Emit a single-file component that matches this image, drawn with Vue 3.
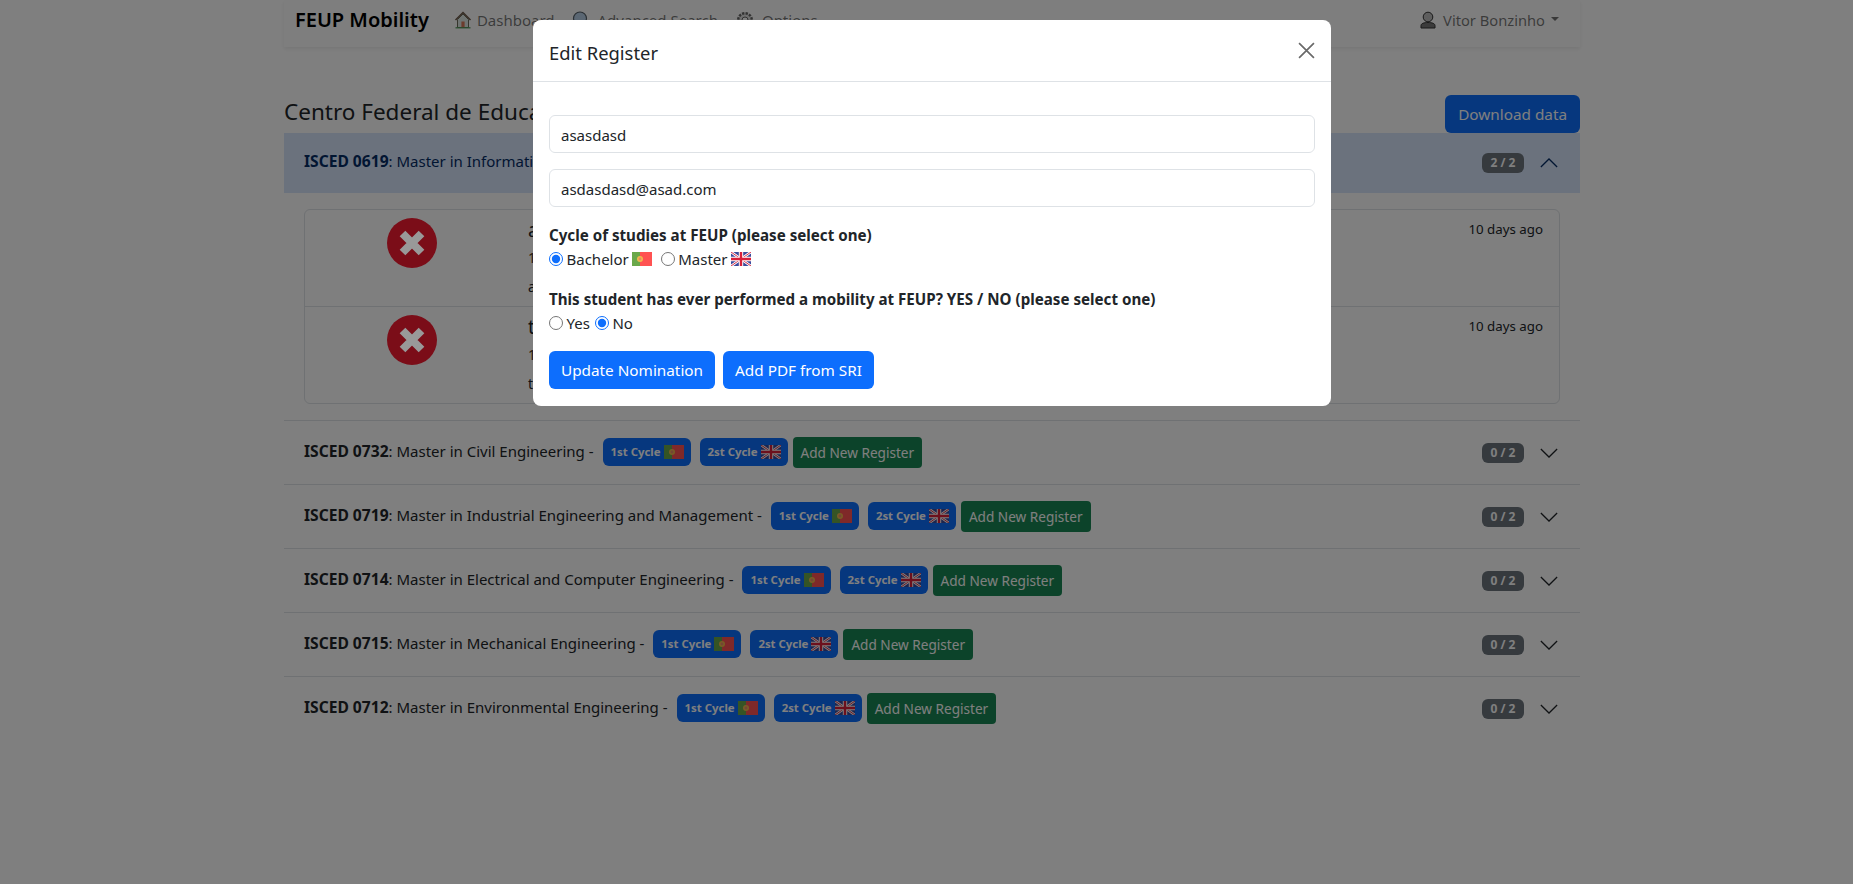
<script setup>
const rows = [
  { code: '0732', name: 'Master in Civil Engineering' },
  { code: '0719', name: 'Master in Industrial Engineering and Management' },
  { code: '0714', name: 'Master in Electrical and Computer Engineering' },
  { code: '0715', name: 'Master in Mechanical Engineering' },
  { code: '0712', name: 'Master in Environmental Engineering' },
]
const people = [
  { who: 'a', num: '1', mail: 'a' },
  { who: 't', num: '1', mail: 't' },
]
</script>

<template>
  <div class="page">
    <svg class="defs" width="0" height="0">
      <symbol id="pt" viewBox="0 0 20 14">
        <rect width="20" height="14" fill="#ff5252" />
        <rect width="8" height="14" fill="#6aa84a" />
        <circle cx="8" cy="7" r="3" fill="#f2b84b" />
        <circle cx="8" cy="7" r="1.4" fill="#e88a6a" />
      </symbol>
      <symbol id="uk" viewBox="0 0 20 14">
        <rect width="20" height="14" fill="#3b4a9c" />
        <path d="M0 0L20 14M20 0L0 14" stroke="#fff" stroke-width="2.6" />
        <path d="M0 0L20 14M20 0L0 14" stroke="#d8304a" stroke-width="1" />
        <path d="M10 0V14M0 7H20" stroke="#fff" stroke-width="4.4" />
        <path d="M10 0V14M0 7H20" stroke="#d8203a" stroke-width="2.4" />
      </symbol>
    </svg>

    <div class="container">
      <nav class="navbar">
        <span class="brand">FEUP Mobility</span>
        <a class="nav-link home">
          <svg class="nav-ico" viewBox="0 0 18 18">
            <path d="M1.5 9L9 1.5 16.5 9" fill="none" stroke="#6d5a4a" stroke-width="1.5" />
            <path d="M3.5 8.5V16.5H14.5V8.5L9 3z" fill="#dfe8e4" stroke="#6d6a5a" stroke-width="1" />
            <rect x="7.4" y="10.5" width="3.2" height="6" fill="#d9785a" />
            <rect x="1.5" y="16.2" width="15" height="1.2" fill="#4f9a5a" />
          </svg>
          Dashboard
        </a>
        <a class="nav-link">
          <svg class="nav-ico" viewBox="0 0 18 18">
            <circle cx="8" cy="7.5" r="6.5" fill="#b6cfe6" stroke="#56606a" stroke-width="1.2" />
            <path d="M12.5 12.5L17 17" stroke="#56606a" stroke-width="2" />
          </svg>
          Advanced Search
        </a>
        <a class="nav-link">
          <svg class="nav-ico" viewBox="0 0 18 18">
            <circle cx="9" cy="9" r="6.8" fill="#ddd" stroke="#666" stroke-width="2.4" stroke-dasharray="2.4 1.2" />
            <circle cx="9" cy="9" r="3" fill="#fff" stroke="#666" stroke-width="1" />
          </svg>
          Options
        </a>
        <a class="nav-link user">
          <svg class="nav-ico" viewBox="0 0 18 18">
            <circle cx="9" cy="6" r="4.8" fill="#bdbdbd" stroke="#333" stroke-width="1" />
            <path d="M2 17V14.5C2 12.5 5 11.5 9 11.5S16 12.5 16 14.5V17z" fill="#777" stroke="#333" stroke-width="1" />
          </svg>
          Vitor Bonzinho
          <i class="caret"></i>
        </a>
      </nav>

      <div class="title-row">
        <h4 class="title">Centro Federal de Educação Tecnológica Celso Suckow da Fonseca</h4>
        <button class="btn btn-primary">Download data</button>
      </div>

      <div class="accordion">
        <div class="acc-head active">
          <span class="acc-text"><b>ISCED 0619</b>: Master in Information Systems and Computer Engineering</span>
          <span class="pill">2 / 2</span>
          <svg class="chev up" viewBox="0 0 16 16"><path d="M1.5 4.8L8 11.2 14.5 4.8" fill="none" stroke="#052c65" stroke-width="1" /></svg>
        </div>
        <div class="acc-body">
          <div class="list">
            <div v-for="p in people" :key="p.who" class="list-item">
              <div class="icon-col">
                <svg class="status" viewBox="0 0 50 50">
                  <circle cx="25" cy="25" r="25" fill="#7b0d18" />
                  <path d="M15.5 15.5L34.5 34.5M34.5 15.5L15.5 34.5" stroke="#999" stroke-width="8" />
                </svg>
              </div>
              <div class="info">
                <div class="who">{{ p.who }}</div>
                <div class="num">{{ p.num }}</div>
                <div class="mail">{{ p.mail }}</div>
              </div>
              <small class="ago">10 days ago</small>
            </div>
          </div>
        </div>

        <div v-for="r in rows" :key="r.code" class="acc-head">
          <span class="acc-text"><b>ISCED {{ r.code }}</b>: {{ r.name }} -</span>
          <span class="badge">1st Cycle <svg class="flag"><use href="#pt" /></svg></span>
          <span class="badge">2st Cycle <svg class="flag"><use href="#uk" /></svg></span>
          <button class="btn btn-sm btn-success">Add New Register</button>
          <span class="pill">0 / 2</span>
          <svg class="chev" viewBox="0 0 16 16"><path d="M1.5 4.8L8 11.2 14.5 4.8" fill="none" stroke="#212529" stroke-width="1" /></svg>
        </div>
      </div>
    </div>

    <div class="backdrop"></div>

    <div class="modal-wrap">
      <div class="modal">
        <div class="modal-header">
          <span class="modal-title">Edit Register</span>
          <svg class="close" viewBox="0 0 16 16"><path d="M1 1L15 15M15 1L1 15" stroke="#6a6a6a" stroke-width="1.6" /></svg>
        </div>
        <div class="modal-body">
          <input class="field" value="asasdasd" />
          <input class="field" value="asdasdasd@asad.com" />
          <div class="label first">Cycle of studies at FEUP (please select one)</div>
          <div class="radios">
            <input type="radio" name="cycle" checked />
            <span>Bachelor</span>
            <svg class="flag"><use href="#pt" /></svg>
            <input type="radio" name="cycle" class="gap" />
            <span>Master</span>
            <svg class="flag"><use href="#uk" /></svg>
          </div>
          <div class="label second">This student has ever performed a mobility at FEUP? YES / NO (please select one)</div>
          <div class="radios">
            <input type="radio" name="mob" />
            <span>Yes</span>
            <input type="radio" name="mob" checked />
            <span>No</span>
          </div>
          <div class="actions">
            <button class="btn btn-primary">Update Nomination</button>
            <button class="btn btn-primary">Add PDF from SRI</button>
          </div>
        </div>
      </div>
    </div>
  </div>
</template>

<style>
html, body { margin: 0; overflow: hidden; background: #fff; }
</style>

<style scoped>
.page {
  width: 1864px;
  height: 884px;
  font-family: "Noto Sans", "Open Sans", sans-serif;
  font-size: 15px;
  line-height: 24px;
  color: #212529;
}
.defs { position: absolute; }
.container { width: 1296px; margin: 0 auto; }
.navbar {
  height: 47px;
  box-sizing: border-box;
  padding: 0 21px 7px 11px;
  display: flex;
  align-items: center;
  background: #fcfcfc;
  box-shadow: 0 2px 4px rgba(0, 0, 0, .075);
}
.brand { font-size: 20px; font-weight: 600; margin-right: 25px; color: #000; }
.nav-link { display: flex; align-items: center; gap: 8px; color: rgba(0, 0, 0, .55); margin-right: 18px; }
.nav-link.home { gap: 5px; margin-right: 17px; }
.nav-ico { width: 18px; height: 18px; }
.nav-link.user { margin: 0 0 0 auto; font-size: 14.7px; gap: 6px; }
.caret {
  width: 0; height: 0;
  border-top: 4.8px solid currentColor;
  border-left: 4.8px solid transparent;
  border-right: 4.8px solid transparent;
  margin-bottom: 3px;
}
.title-row { display: flex; justify-content: space-between; align-items: flex-end; margin-top: 48px; }
.title { margin: 0 0 6px; font-size: 22.5px; font-weight: 400; line-height: 30px; }
.btn {
  font: inherit;
  font-size: 15.3px;
  height: 38px;
  padding: 0 12px;
  border: 0;
  border-radius: 6px;
  color: #fff;
  white-space: nowrap;
}
.title-row .btn { padding: 0 13px; }
.btn-primary { background: #0d6efd; }
.btn-success { background: #198754; }
.btn-sm { height: 31px; padding: 0 8px; font-size: 13.6px; border-radius: 4px; }
.acc-head {
  height: 64px;
  box-sizing: border-box;
  padding: 0 20px;
  display: flex;
  align-items: center;
  border-top: 1px solid #dee2e6;
}
.acc-head.active { height: 60px; border-top: 0; background: #d6e4fb; color: #052c65; }
.acc-text { margin-bottom: 4px; margin-right: 9px; }
.acc-text b { font-weight: 700; font-size: 15.6px; }
.badge {
  display: inline-flex;
  align-items: center;
  gap: 3px;
  height: 28px;
  box-sizing: border-box;
  padding: 0 7px 0 8px;
  margin-right: 9px;
  margin-bottom: 2px;
  background: #0d6efd;
  color: #fff;
  border-radius: 6px;
  font-size: 11.4px;
  font-weight: 700;
}
.badge + .btn { margin-left: -4px; }
.flag { width: 20px; height: 14px; display: block; }
.pill {
  margin-left: auto;
  width: 42px;
  height: 20px;
  border-radius: 6px;
  background: #6c757d;
  color: #fff;
  font-size: 12px;
  line-height: 20px;
  font-weight: 700;
  text-align: center;
}
.chev { width: 20px; height: 20px; margin: 0 1px 0 15px; }
.chev.up { transform: rotate(180deg); }
.acc-body { padding: 16px 20px; height: 227px; box-sizing: border-box; }
.list { border: 1px solid #dee2e6; border-radius: 6px; }
.list-item { height: 96px; box-sizing: border-box; display: flex; padding: 8px 16px; }
.list-item + .list-item { border-top: 1px solid #dee2e6; height: 97px; }
.icon-col { width: 207px; padding-right: 26px; box-sizing: border-box; display: flex; justify-content: center; align-items: flex-start; }
.status { width: 50px; height: 50px; position: relative; z-index: 2; }
.info { width: 8px; white-space: nowrap; }
.who { font-size: 19px; line-height: 24px; }
.num { margin-top: 2px; line-height: 28px; font-size: 14px; color: #4a3418; }
.mail { line-height: 30px; font-size: 14px; }
.ago { margin-left: auto; font-size: 13.3px; line-height: 22px; }
.backdrop { position: fixed; inset: 0; z-index: 1; background: rgba(0, 0, 0, .5); }
.modal-wrap { position: fixed; left: 0; top: 0; z-index: 3; width: 1864px; display: flex; justify-content: center; padding-top: 20px; }
.modal { width: 798px; height: 386px; background: #fff; border-radius: 8px; overflow: hidden; }
.modal-header {
  height: 62px;
  box-sizing: border-box;
  padding: 0 16px;
  display: flex;
  align-items: center;
  justify-content: space-between;
  border-bottom: 1px solid #dee2e6;
}
.modal-title { font-size: 18.4px; margin-top: 4px; }
.close { width: 17px; height: 17px; }
.modal-body { padding: 33px 16px 0; }
.field {
  display: block;
  width: 100%;
  height: 38px;
  box-sizing: border-box;
  padding: 1px 11px 0;
  margin-bottom: 16px;
  border: 1px solid #dee2e6;
  border-radius: 6px;
  font: inherit;
  color: #212529;
  outline: 0;
}
.label { font-weight: 700; font-size: 15.15px; }
.label.first { margin-top: 2px; }
.label.second { margin-top: 16px; }
.radios { display: flex; align-items: center; height: 24px; }
.radios input { width: 14px; height: 14px; margin: 0 3.5px 0 0; accent-color: #0d6efd; }
.radios .flag { margin-left: 3px; }
.radios span + input { margin-left: 5px; }
.radios .gap { margin-left: 9px; }
.actions { display: flex; gap: 8px; margin-top: 16px; }
</style>
